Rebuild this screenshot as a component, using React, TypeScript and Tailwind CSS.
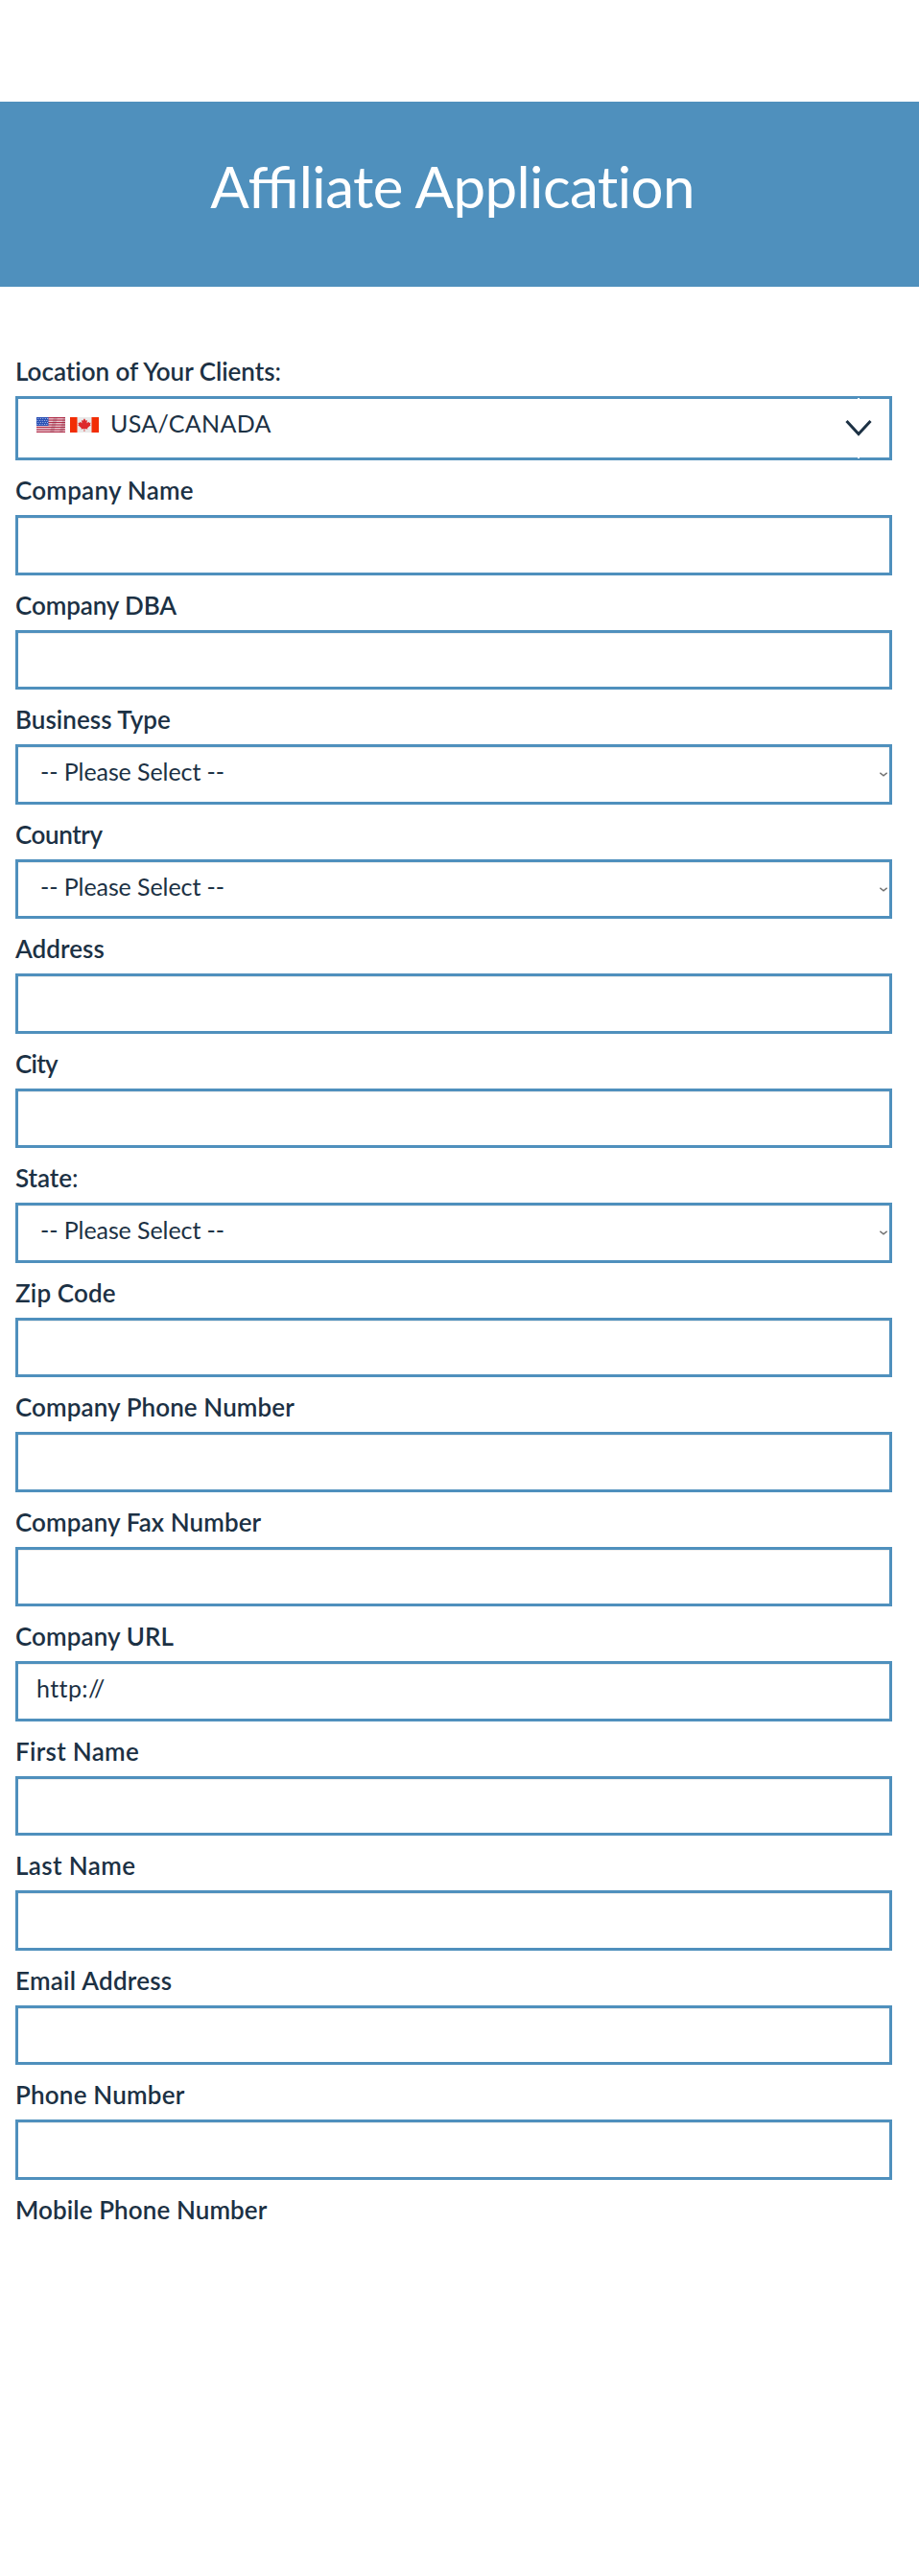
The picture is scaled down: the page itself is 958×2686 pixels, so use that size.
type FieldDef = {
  label: string;
  colon?: boolean;
  tracking: string;
  kind?: "text" | "select";
  value?: string;
};

const fields: FieldDef[] = [
  { label: "Company Name", tracking: "tracking-[0.25px]" },
  { label: "Company DBA", tracking: "tracking-[-0.1px]" },
  { label: "Business Type", tracking: "tracking-[0.05px]", kind: "select" },
  { label: "Country", tracking: "tracking-[-0.4px]", kind: "select" },
  { label: "Address", tracking: "tracking-[0.05px]" },
  { label: "City", tracking: "tracking-[-0.75px]" },
  { label: "State", colon: true, tracking: "tracking-[-0.05px]", kind: "select" },
  { label: "Zip Code", tracking: "tracking-[0.15px]" },
  { label: "Company Phone Number", tracking: "tracking-[0.1px]" },
  { label: "Company Fax Number", tracking: "tracking-[0.1px]" },
  { label: "Company URL", tracking: "tracking-[0.1px]", value: "http://" },
  { label: "First Name", tracking: "tracking-[0.3px]" },
  { label: "Last Name", tracking: "tracking-[0.4px]" },
  { label: "Email Address", tracking: "tracking-[0.25px]" },
  { label: "Phone Number", tracking: "tracking-[0.2px]" },
];

function Label({ text, colon, tracking }: { text: string; colon?: boolean; tracking: string }) {
  return (
    <div className={`h-[57px] pt-[15px] text-[26px] leading-8 font-semibold whitespace-nowrap ${tracking}`}>
      {text}
      {colon && <span className="font-normal">:</span>}
    </div>
  );
}

function UsFlag() {
  return (
    <svg width="30" height="16" viewBox="0 0 30 16" className="block">
      <rect width="30" height="16" fill="#eedbe0" />
      {[0, 1, 2, 3, 4, 5, 6].map((i) => (
        <rect key={i} y={i * 2.46} width="30" height="1.23" fill="#b5304c" />
      ))}
      <path d="M18 0h4l-4 16h-4zM28 0h2v10l-3 6h-3z" fill="#7a2038" opacity="0.22" />
      <rect width="12.5" height="9" fill="#2b50b4" />
      {[1.5, 3.5, 5.5, 7.5].map((y, r) =>
        [1.5, 4, 6.5, 9, 11.2].map((x) => (
          <circle key={`${x}-${y}`} cx={r % 2 ? x - 0.4 : x + 0.3} cy={y} r="0.6" fill="#b9c9ee" />
        )),
      )}
    </svg>
  );
}

function CanadaFlag() {
  return (
    <svg width="30" height="16" viewBox="0 0 30 16" className="block">
      <rect width="30" height="16" fill="#e9e9e9" />
      <rect width="7.5" height="16" fill="#f22d05" />
      <rect x="22.5" width="7.5" height="16" fill="#f22d05" />
      <path
        d="M15 1.2l1.5 2.6 1.4-.7-.4 3.2 2-1.6.5 1.2 1.6-.2-.7 2 .8.6-3.6 3 .3 1.1-3.1-.4V15h-.7v-3l-3.1.4.3-1.1-3.6-3 .8-.6-.7-2 1.6.2.5-1.2 2 1.6-.4-3.2 1.4.7z"
        fill="#dd2a2c"
      />
    </svg>
  );
}

function Caret() {
  return (
    <svg width="8" height="5" viewBox="0 0 8 5" className="mt-[26px] mr-[2px] block shrink-0">
      <path d="M0.3 0.9L4 3.9L7.7 0.9" fill="none" stroke="#707070" strokeWidth="1.5" />
    </svg>
  );
}

function Field({ field }: { field: FieldDef }) {
  const isSelect = field.kind === "select";
  return (
    <div>
      <Label text={field.label} colon={field.colon} tracking={field.tracking} />
      <div className="flex h-[62.5px] items-start justify-between border-[3px] border-[#4f90bd] bg-white shadow-[inset_0_1px_1px_rgba(0,0,0,0.075)]">
        {isSelect ? (
          <>
            <span className="pt-[9px] pl-[23px] text-[25px] leading-8 tracking-[-0.08px]">-- Please Select --</span>
            <Caret />
          </>
        ) : (
          <span className="pt-[9px] pl-[19px] text-[25px] leading-8 tracking-[0.4px]">{field.value}</span>
        )}
      </div>
    </div>
  );
}

export default function App() {
  return (
    <div className="min-h-[2686px] bg-white pt-[106px] font-['Lato','Open_Sans',sans-serif] text-[#1c3144]">
      <header className="h-[193px] bg-[#4f90bd] pt-[52px] pr-[15px] text-center text-white">
        <h1 className="text-[60px] leading-[72px] font-normal whitespace-nowrap">
          Affi<span className="tracking-[-0.6px]">liate Application</span>
        </h1>
      </header>
      <main className="pt-[57px] pr-7 pl-4">
        <div className="h-[57px] pt-[15px] text-[26px] leading-8 font-semibold tracking-[-0.02px] whitespace-nowrap">
          Location of Your Clients<span className="font-normal">:</span>
        </div>
        <div className="relative flex h-[67px] items-start border-[3px] border-[#4f90bd] bg-white pr-[18px] pl-[19px]">
          <div className="flex gap-[5px] pt-[19px]">
            <UsFlag />
            <CanadaFlag />
          </div>
          <span className="pt-[9px] pl-[12px] text-[25px] leading-8 tracking-[0.3px]">USA/CANADA</span>
          <svg width="28" height="18" viewBox="0 0 28 18" className="mt-[21px] ml-auto block">
            <path d="M1.5 2L14 15.5L26.5 2" fill="none" stroke="#1c3144" strokeWidth="3" />
          </svg>
          <span className="absolute -top-px right-[31px] h-px w-[2px] bg-white" />
          <span className="absolute right-[31px] -bottom-px h-px w-[2px] bg-white" />
        </div>
        {fields.map((field) => (
          <Field key={field.label} field={field} />
        ))}
        <Label text="Mobile Phone Number" tracking="tracking-[0.1px]" />
      </main>
    </div>
  );
}
